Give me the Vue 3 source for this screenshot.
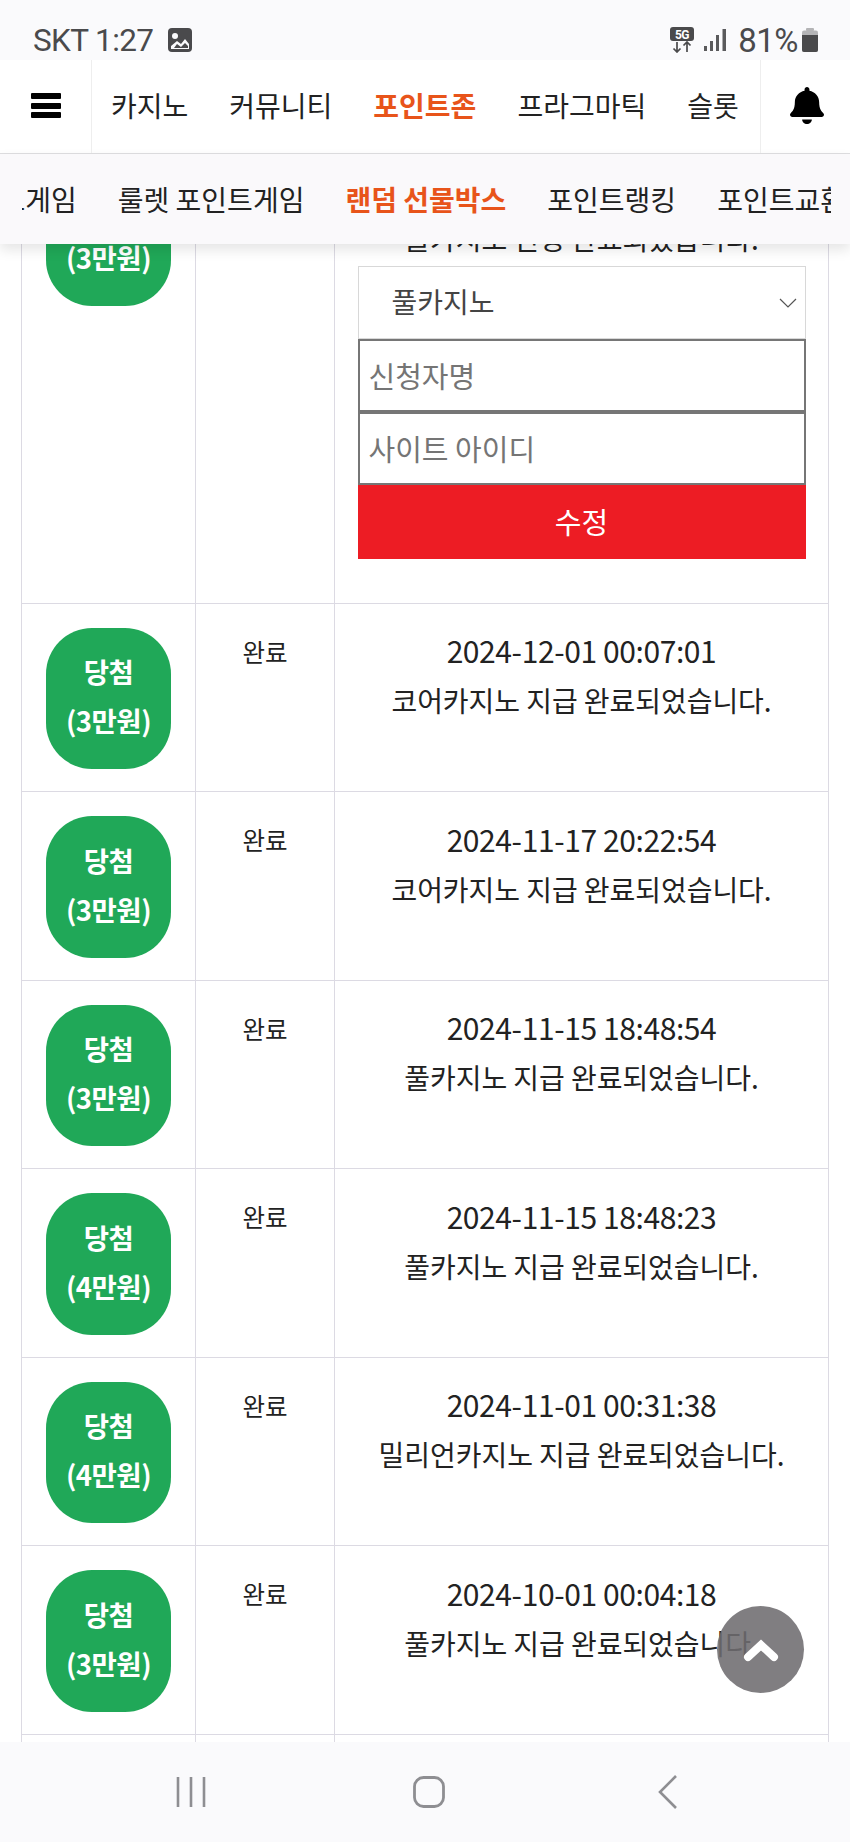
<template>
  <div class="page">
    <!-- 목록 -->
    <div class="list-wrap">
      <table class="result-table">
        <colgroup>
          <col class="col-badge" />
          <col class="col-state" />
          <col />
        </colgroup>
        <tbody>
          <tr class="first-row">
            <td><div class="badge"><span>당첨<br />(3만원)</span></div></td>
            <td class="state">완료</td>
            <td class="detail">
              <div class="date">2024-12-01 00:12:44</div>
              <div>풀카지노 신청 완료되었습니다.</div>
              <form class="edit-form" @submit.prevent>
                <div class="select-box">
                  <select class="site-select">
                    <option>풀카지노</option>
                    <option>코어카지노</option>
                    <option>밀리언카지노</option>
                  </select>
                  <svg class="select-arrow" viewBox="0 0 18 10" fill="none" stroke="#555" stroke-width="1.2">
                    <polyline points="1,1 9,9 17,1"></polyline>
                  </svg>
                </div>
                <input class="text-input" type="text" placeholder="신청자명" />
                <input class="text-input" type="text" placeholder="사이트 아이디" />
                <button class="btn-edit" type="submit">수정</button>
              </form>
            </td>
          </tr>
          <tr v-for="row in rows" :key="row.date">
            <td><div class="badge"><span>당첨<br />({{ row.prize }})</span></div></td>
            <td class="state">완료</td>
            <td class="detail">
              <div class="date">{{ row.date }}</div>
              <div>{{ row.site }} 지급 완료되었습니다.</div>
            </td>
          </tr>
          <tr class="tail-row">
            <td></td>
            <td></td>
            <td></td>
          </tr>
        </tbody>
      </table>
    </div>

    <!-- 상단 고정 -->
    <header class="top">
      <div class="status-bar">
        <div class="status-left">
          <span>SKT 1:27</span>
          <svg class="gallery-icon" viewBox="0 0 24 24">
            <rect x="0" y="0" width="24" height="24" rx="4" fill="#4a4a4c"></rect>
            <circle cx="7" cy="8" r="3" fill="#fafafc"></circle>
            <path d="M3 21v-3l6-5 4 3 4-5 4 5v5z" fill="#fafafc"></path>
            <path d="M6 20l3-4 4 3 4-4 3 3v2z" fill="#4a4a4c"></path>
          </svg>
        </div>
        <div class="status-right">
          <svg class="net-icon" viewBox="0 0 24 26">
            <rect x="0" y="0" width="24" height="14" rx="3" fill="#4a4a4c"></rect>
            <text x="12" y="11.5" text-anchor="middle" class="net-text">5G</text>
            <path d="M7 15v10M3.5 21.5l3.5 3.5 3.5-3.5M17 25v-10M13.5 18.5l3.5-3.5 3.5 3.5" fill="none" stroke="#4a4a4c" stroke-width="1.7"></path>
          </svg>
          <svg class="signal-icon" viewBox="0 0 22 22">
            <rect x="0" y="17" width="3" height="5" fill="#5a5a5c"></rect>
            <rect x="6" y="12" width="3" height="10" fill="#5a5a5c"></rect>
            <rect x="12" y="6" width="3" height="16" fill="#5a5a5c"></rect>
            <rect x="18.5" y="0" width="3.5" height="22" fill="#5a5a5c"></rect>
          </svg>
          <span class="battery-text">81%</span>
          <svg class="battery-icon" viewBox="0 0 16 24">
            <rect x="4" y="0" width="8" height="3" rx="1" fill="#b4b4b6"></rect>
            <rect x="0" y="2.5" width="16" height="21.5" rx="2" fill="#b4b4b6"></rect>
            <path d="M0 7h16v15a2 2 0 0 1-2 2H2a2 2 0 0 1-2-2z" fill="#4a4a4c"></path>
          </svg>
        </div>
      </div>

      <nav class="main-nav">
        <div class="menu-btn">
          <div class="menu-lines">
            <span></span><span></span><span></span>
          </div>
        </div>
        <div class="main-items">
          <span v-for="item in mainMenu" :key="item" :class="{ active: item === '포인트존' }">{{ item }}</span>
        </div>
        <div class="bell-btn">
          <svg viewBox="0 0 448 512" preserveAspectRatio="none">
            <path d="M224 512c35.32 0 63.97-28.65 63.97-64H160.03c0 35.35 28.65 64 63.97 64zm215.39-149.71c-19.32-20.76-55.47-51.99-55.47-154.29 0-77.7-54.48-139.9-127.94-155.16V32c0-17.67-14.32-32-31.98-32s-31.98 14.33-31.98 32v20.84C118.56 68.1 64.08 130.3 64.08 208c0 102.3-36.15 133.53-55.47 154.29-6 6.45-8.66 14.16-8.61 21.71.11 16.4 12.98 32 32.1 32h383.8c19.12 0 32-15.6 32.1-32 .05-7.55-2.61-15.27-8.61-21.71z"></path>
          </svg>
        </div>
      </nav>

      <nav class="sub-nav">
        <div class="sub-clip">
          <div class="sub-track">
            <span v-for="item in subMenu" :key="item" :class="{ active: item === '랜덤 선물박스' }">{{ item }}</span>
          </div>
        </div>
      </nav>
    </header>

    <!-- 위로 버튼 -->
    <div class="to-top">
      <svg viewBox="0 0 36 24" fill="none" stroke="#fff" stroke-width="8" stroke-linecap="round" stroke-linejoin="miter">
        <polyline points="5,19 18,7 31,19"></polyline>
      </svg>
    </div>

    <!-- 하단 바 -->
    <footer class="bottom-bar">
      <svg class="bar-recent" viewBox="0 0 30 32" fill="none" stroke="#8e8e92" stroke-width="2.6">
        <path d="M2 1v30M15 1v30M28 1v30"></path>
      </svg>
      <svg class="bar-home" viewBox="0 0 32 32" fill="none" stroke="#8e8e92" stroke-width="2.8">
        <rect x="1.5" y="1.5" width="29" height="29" rx="9"></rect>
      </svg>
      <svg class="bar-back" viewBox="0 0 20 34" fill="none" stroke="#8e8e92" stroke-width="2.6">
        <polyline points="18,1 2,17 18,33"></polyline>
      </svg>
    </footer>
  </div>
</template>

<script setup>
const mainMenu = ['카지노', '커뮤니티', '포인트존', '프라그마틱', '슬롯']
const subMenu = ['포인트게임', '룰렛 포인트게임', '랜덤 선물박스', '포인트랭킹', '포인트교환']

const rows = [
  { prize: '3만원', date: '2024-12-01 00:07:01', site: '코어카지노' },
  { prize: '3만원', date: '2024-11-17 20:22:54', site: '코어카지노' },
  { prize: '3만원', date: '2024-11-15 18:48:54', site: '풀카지노' },
  { prize: '4만원', date: '2024-11-15 18:48:23', site: '풀카지노' },
  { prize: '4만원', date: '2024-11-01 00:31:38', site: '밀리언카지노' },
  { prize: '3만원', date: '2024-10-01 00:04:18', site: '풀카지노' }
]
</script>

<style>
html,
body {
  margin: 0;
  background: #fff;
}
</style>

<style scoped>
.page {
  position: relative;
  width: 850px;
  height: 1842px;
  overflow: hidden;
  background: #fff;
  color: #222;
  font-family: "Noto Sans CJK KR", "Noto Sans", sans-serif;
}

.list-wrap {
  padding: 141px 21px 0;
}

.result-table {
  width: 808px;
  table-layout: fixed;
  border-collapse: collapse;
}

.col-badge {
  width: 174px;
}

.col-state {
  width: 139px;
}

.result-table td {
  border: 1px solid #dcdae3;
  padding: 24px 0 22px 24px;
  vertical-align: top;
}

.result-table .first-row td {
  padding-top: 22px;
}

.badge {
  display: flex;
  align-items: center;
  justify-content: center;
  width: 125px;
  height: 141.5px;
  border-radius: 46px;
  background: #20a858;
  color: #fff;
  font-size: 27.5px;
  font-weight: 700;
  line-height: 49px;
  letter-spacing: -0.5px;
  text-align: center;
}

.badge span {
  margin-bottom: 4px;
}

.result-table td.state {
  padding: 23px 0 0;
  font-size: 24.5px;
  line-height: 50px;
  text-align: center;
}

.result-table td.detail {
  padding: 21.5px 0 0;
  font-size: 28px;
  line-height: 50px;
  letter-spacing: -0.05px;
  text-align: center;
}

.result-table td.detail .date {
  font-size: 30px;
  letter-spacing: -0.4px;
}

.result-table .first-row td.detail {
  padding: 20.5px 0 43.7px;
}

.result-table .tail-row td {
  height: 40px;
  padding: 0;
}

.edit-form {
  display: flex;
  flex-direction: column;
  width: 448px;
  margin: 3.5px auto 0;
}

.select-box {
  position: relative;
}

.site-select {
  display: block;
  box-sizing: border-box;
  width: 100%;
  height: 73px;
  padding: 0 0 4px 33px;
  border: 1px solid #d8d8d8;
  border-radius: 0;
  background: #fff;
  color: #444;
  font: inherit;
  appearance: none;
  outline: none;
}

.select-arrow {
  position: absolute;
  right: 9px;
  top: 32px;
  width: 18px;
  height: 10px;
}

.text-input {
  box-sizing: border-box;
  width: 100%;
  height: 73px;
  padding: 0 9px 2px;
  border: 2px solid #767676;
  border-radius: 0;
  background: #fff;
  font: inherit;
  font-size: 29px;
  letter-spacing: 0;
  outline: none;
}

.text-input::placeholder {
  color: #757575;
}

.btn-edit {
  height: 74px;
  padding: 0 0 2px;
  border: none;
  background: #ed1c24;
  color: #fff;
  font: inherit;
  font-size: 29px;
  cursor: pointer;
}

.top {
  position: absolute;
  top: 0;
  left: 0;
  right: 0;
}

.status-bar {
  display: flex;
  align-items: center;
  justify-content: space-between;
  box-sizing: border-box;
  height: 60px;
  padding: 20px 32px 0 33px;
  background: #fafafc;
  color: #4a4a4c;
  font-family: Roboto, "Noto Sans", sans-serif;
  font-size: 31.5px;
  letter-spacing: -0.6px;
}

.status-left,
.status-right {
  display: flex;
  align-items: center;
}

.gallery-icon {
  width: 24px;
  height: 24px;
  margin-left: 15px;
}

.net-icon {
  width: 24px;
  height: 26px;
}

.net-text {
  fill: #fff;
  font-size: 12px;
  font-weight: 700;
  font-family: Roboto, sans-serif;
}

.signal-icon {
  width: 22px;
  height: 22px;
  margin: 0 12px 0 10px;
}

.battery-text {
  font-size: 33px;
  letter-spacing: -0.5px;
}

.battery-icon {
  width: 16px;
  height: 24px;
  margin-left: 4px;
}

.main-nav {
  display: flex;
  box-sizing: border-box;
  height: 94px;
  background: #fff;
  border-bottom: 1px solid #dedee0;
}

.menu-btn {
  flex: 0 0 92px;
  box-sizing: border-box;
  padding: 33px 30px 0 31px;
  border-right: 1px solid #eeeeee;
}

.menu-lines {
  display: flex;
  flex-direction: column;
  justify-content: space-between;
  height: 25px;
}

.menu-lines span {
  display: block;
  height: 6px;
  border-radius: 1px;
  background: #000;
}

.main-items {
  display: flex;
  flex: 1;
  gap: 41px;
  padding-left: 19px;
  font-size: 28px;
  line-height: 90px;
  color: #222;
  white-space: nowrap;
}

.active {
  color: #e8541a;
  font-weight: 700;
}

.bell-btn {
  display: flex;
  flex: 0 0 90px;
  align-items: center;
  justify-content: center;
  box-sizing: border-box;
  padding: 0 0 2px 2px;
  border-left: 1px solid #eeeeee;
}

.bell-btn svg {
  width: 34px;
  height: 37px;
}

.sub-nav {
  height: 90px;
  padding: 0 19px 0 22px;
  background: #faf9fb;
  box-shadow: 0 6px 12px rgba(0, 0, 0, 0.1);
}

.sub-clip {
  height: 100%;
  overflow: hidden;
}

.sub-track {
  display: flex;
  gap: 41px;
  margin-left: -74px;
  font-size: 28px;
  line-height: 90px;
  white-space: nowrap;
}

.to-top {
  position: absolute;
  left: 717px;
  top: 1606px;
  display: flex;
  align-items: center;
  justify-content: center;
  width: 87px;
  height: 87px;
  border-radius: 50%;
  background: rgba(110, 108, 112, 0.88);
}

.to-top svg {
  width: 36px;
  height: 24px;
}

.bottom-bar {
  position: absolute;
  left: 0;
  right: 0;
  bottom: 0;
  height: 100px;
  background: #fafafc;
}

.bar-recent {
  position: absolute;
  left: 176px;
  top: 34px;
  width: 30px;
  height: 32px;
}

.bar-home {
  position: absolute;
  left: 413px;
  top: 34px;
  width: 32px;
  height: 32px;
}

.bar-back {
  position: absolute;
  left: 658px;
  top: 33px;
  width: 20px;
  height: 34px;
}
</style>
